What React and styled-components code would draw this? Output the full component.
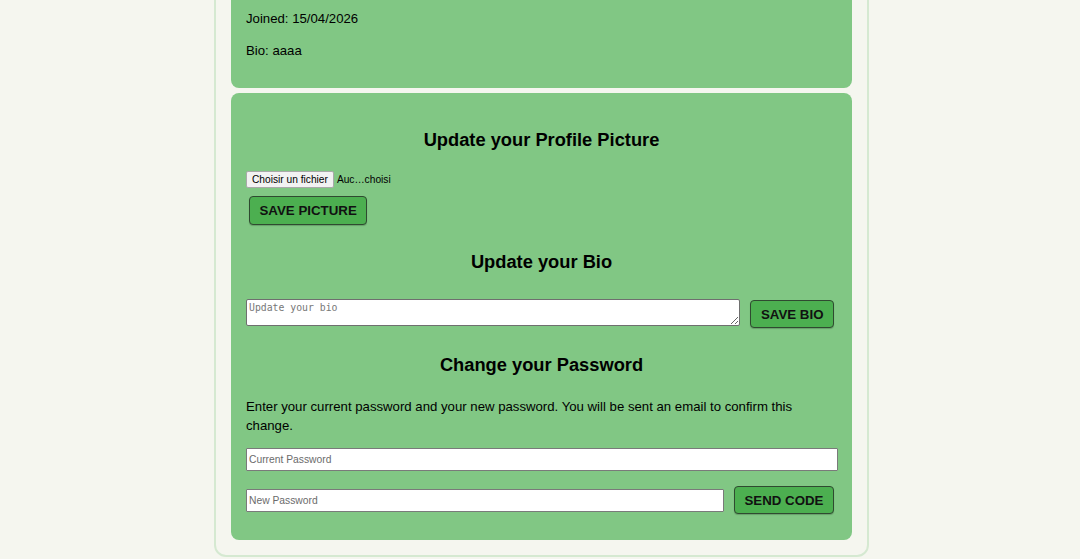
import React from "react";
import styled, { createGlobalStyle } from "styled-components";

const GlobalStyle = createGlobalStyle`
  html, body {
    margin: 0;
    padding: 0;
    background: #f5f6ef;
    font-family: "Liberation Sans", Arial, Helvetica, sans-serif;
    color: #000;
    overflow: hidden;
  }
`;

const Page = styled.div`
  width: 655px;
  box-sizing: border-box;
  margin: -36px 0 0 calc(50% - 326px);
  padding: 15px;
  border: 2px solid #d5e9d1;
  border-radius: 12px;
  display: flex;
  flex-direction: column;
  gap: 5px;
`;

const Card = styled.div`
  background: #81c784;
  border-radius: 8px;
  padding: ${(p) => (p.$form ? "16px 15px 26px" : "15px")};
  display: ${(p) => (p.$form ? "flex" : "block")};
  flex-direction: column;
`;

const InfoLine = styled.p`
  font-size: 13.2px;
  line-height: 19px;
  margin: 13px 0;
`;

const Section = styled.section`
  display: flex;
  flex-direction: column;
  align-items: flex-start;

  & + & {
    margin-top: 6px;
  }
`;

const Heading = styled.h2`
  align-self: stretch;
  text-align: center;
  font-size: 18.3px;
  line-height: 21px;
  font-weight: bold;
  margin: 20px 0 21px;
`;

const FileRow = styled.div`
  display: flex;
  align-items: center;
  gap: 3px;
  height: 17px;
  font-size: 10.2px;
`;

const FileButton = styled.label`
  box-sizing: border-box;
  height: 17px;
  display: flex;
  align-items: center;
  padding: 0 5px;
  background: #f2f2f2;
  border: 1px solid #a9a9a9;
  border-radius: 2px;
  font-size: 10.2px;
  color: #000;
  cursor: pointer;

  input {
    display: none;
  }
`;

const Button = styled.button`
  box-sizing: border-box;
  height: ${(p) => p.$h || 28}px;
  margin: ${(p) => p.$m || "0 3px 0 0"};
  padding: 0 9.5px;
  flex-shrink: 0;
  background: #4caf50;
  border: 1px solid #2f4a30;
  border-radius: 4px;
  box-shadow: 0 1px 1px rgba(0, 0, 0, 0.2);
  font-family: "Liberation Sans", Arial, sans-serif;
  font-weight: bold;
  font-size: 13.3px;
  color: #111;
  text-transform: uppercase;
  cursor: pointer;
`;

const Row = styled.div`
  align-self: stretch;
  display: flex;
  align-items: ${(p) => p.$align || "center"};
  gap: 10px;
  margin-top: ${(p) => p.$mt || 0}px;
`;

const BioInput = styled.textarea`
  flex: 1;
  box-sizing: border-box;
  height: 27px;
  margin: 0;
  padding: 2px 2px;
  border: 1px solid #6f6f6f;
  border-radius: 2px;
  background: #fff;
  font-family: "DejaVu Sans Mono", "Liberation Mono", monospace;
  font-size: 9.8px;

  &::placeholder {
    color: #777;
  }
`;

const Note = styled.p`
  font-size: 13.2px;
  line-height: 19px;
  margin: 1px 0 13px;
`;

const TextInput = styled.input`
  box-sizing: border-box;
  height: 23px;
  margin: 0;
  padding: 0 2px;
  border: 1px solid #7a7a7a;
  border-radius: 1px;
  background: #fff;
  font-family: "Liberation Sans", Arial, sans-serif;
  font-size: 10.3px;
  ${(p) => (p.$full ? "align-self: stretch; width: calc(100% + 1px);" : "flex: 1;")}

  &::placeholder {
    color: #6b6b6b;
  }
`;

export default function App() {
  return (
    <>
      <GlobalStyle />
      <Page>
        <Card>
          <InfoLine>Joined: 15/04/2026</InfoLine>
          <InfoLine>Bio: aaaa</InfoLine>
        </Card>
        <Card $form>
          <Section>
            <Heading>Update your Profile Picture</Heading>
            <FileRow>
              <FileButton>
                Choisir un fichier
                <input type="file" />
              </FileButton>
              <span>Auc…choisi</span>
            </FileRow>
            <Button $h={29} $m="8px 0 0 3px">Save Picture</Button>
          </Section>
          <Section>
            <Heading>Update your Bio</Heading>
            <Row $align="flex-start" $mt={6}>
              <BioInput placeholder="Update your bio" />
              <Button $m="1px 3px 0 0">Save Bio</Button>
            </Row>
          </Section>
          <Section>
            <Heading>Change your Password</Heading>
            <Note>
              Enter your current password and your new password. You will be
              sent an email to confirm this change.
            </Note>
            <TextInput $full type="password" placeholder="Current Password" />
            <Row $mt={15}>
              <TextInput type="password" placeholder="New Password" />
              <Button>Send Code</Button>
            </Row>
          </Section>
        </Card>
      </Page>
    </>
  );
}
